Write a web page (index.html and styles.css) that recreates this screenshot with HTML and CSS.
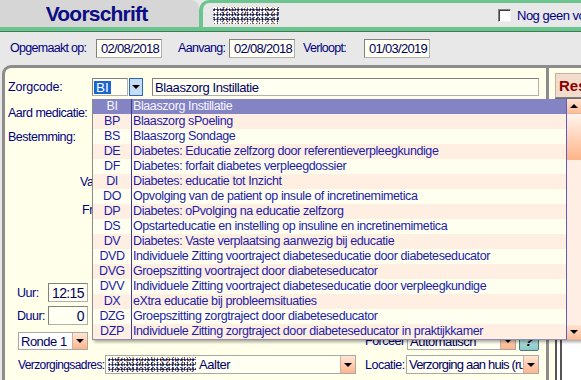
FILE: index.html
```html
<!DOCTYPE html>
<html lang="nl">
<head>
    <meta charset="UTF-8">
    <title>Voorschrift</title>
    <link rel="stylesheet" href="styles.css">
</head>
<body>
    <div class="header">
        <div class="tab-main">Voorschrift</div>
        <div class="tab-patient">
            <span class="noise noise-name"></span>
            <label class="check"><span class="check-box"></span>Nog geen voorschrift</label>
        </div>
    </div>

    <div class="dates">
        <span class="lbl lbl-opgemaakt">Opgemaakt op:</span>
        <span class="field date">02/08/2018</span>
        <span class="lbl lbl-aanvang">Aanvang:</span>
        <span class="field date">02/08/2018</span>
        <span class="lbl lbl-verloopt">Verloopt:</span>
        <span class="field date">01/03/2019</span>
    </div>

    <div class="work">
        <div class="panel">
            <div class="row row-zorgcode">
                <span class="lbl lbl-zorgcode">Zorgcode:</span>
                <span class="field code"><span class="sel">BI</span></span>
                <span class="drop drop-blue"></span>
                <span class="field desc">Blaaszorg Instillatie</span>
            </div>
            <div class="row row-aard"><span class="lbl">Aard medicatie:</span></div>
            <div class="row row-best"><span class="lbl">Bestemming:</span></div>
            <div class="row row-van"><span class="lbl lbl-van">Vanaf:</span></div>
            <div class="row row-freq"><span class="lbl lbl-freq">Frequentie:</span></div>

            <div class="row row-uur">
                <span class="lbl lbl-small">Uur:</span>
                <span class="field num">12:15</span>
            </div>
            <div class="row row-duur">
                <span class="lbl lbl-small">Duur:</span>
                <span class="field num">0</span>
            </div>
            <div class="row row-ronde">
                <span class="combo combo-ronde"><span class="combo-text">Ronde 1</span><span class="drop drop-peach"></span></span>
                <span class="lbl lbl-forceer">Forceer</span>
                <span class="combo combo-forceer"><span class="combo-text">Automatisch</span><span class="drop drop-peach"></span></span>
                <span class="help">?</span>
            </div>
            <div class="row row-verz">
                <span class="lbl lbl-verz">Verzorgingsadres:</span>
                <span class="combo combo-adres"><span class="combo-text"><span class="noise noise-adres"></span>&nbsp;Aalter</span><span class="drop drop-peach"></span></span>
                <span class="lbl lbl-locatie">Locatie:</span>
                <span class="combo combo-locatie"><span class="combo-text">Verzorging aan huis (rurale zone)</span><span class="drop drop-peach"></span></span>
            </div>
        </div>
        <div class="side">
            <div class="res-btn">Res</div>
            <div class="side-box"></div>
        </div>
    </div>

    <!-- open dropdown of Zorgcode -->
    <div class="dd">
        <div class="dd-list">
            <div class="opt opt-active"><span class="opt-code">BI</span><span class="opt-desc">Blaaszorg Instillatie</span></div>
            <div class="opt"><span class="opt-code">BP</span><span class="opt-desc">Blaaszorg sPoeling</span></div>
            <div class="opt"><span class="opt-code">BS</span><span class="opt-desc">Blaaszorg Sondage</span></div>
            <div class="opt"><span class="opt-code">DE</span><span class="opt-desc">Diabetes: Educatie zelfzorg door referentieverpleegkundige</span></div>
            <div class="opt"><span class="opt-code">DF</span><span class="opt-desc">Diabetes: forfait diabetes verpleegdossier</span></div>
            <div class="opt"><span class="opt-code">DI</span><span class="opt-desc">Diabetes: educatie tot Inzicht</span></div>
            <div class="opt"><span class="opt-code">DO</span><span class="opt-desc">Opvolging van de patient op insule of incretinemimetica</span></div>
            <div class="opt"><span class="opt-code">DP</span><span class="opt-desc">Diabetes: oPvolging na educatie zelfzorg</span></div>
            <div class="opt"><span class="opt-code">DS</span><span class="opt-desc">Opstarteducatie en instelling op insuline en incretinemimetica</span></div>
            <div class="opt"><span class="opt-code">DV</span><span class="opt-desc">Diabetes: Vaste verplaatsing aanwezig bij educatie</span></div>
            <div class="opt"><span class="opt-code">DVD</span><span class="opt-desc">Individuele Zitting voortraject diabeteseducatie door diabeteseducator</span></div>
            <div class="opt"><span class="opt-code">DVG</span><span class="opt-desc">Groepszitting voortraject door diabeteseducator</span></div>
            <div class="opt"><span class="opt-code">DVV</span><span class="opt-desc">Individuele Zitting voortraject diabeteseducatie door verpleegkundige</span></div>
            <div class="opt"><span class="opt-code">DX</span><span class="opt-desc">eXtra educatie bij probleemsituaties</span></div>
            <div class="opt"><span class="opt-code">DZG</span><span class="opt-desc">Groepszitting zorgtraject door diabeteseducator</span></div>
            <div class="opt"><span class="opt-code">DZP</span><span class="opt-desc">Individuele Zitting zorgtraject door diabeteseducator in praktijkkamer</span></div>
        </div>
        <div class="dd-scroll">
            <span class="sb-btn sb-up"></span>
            <span class="sb-thumb"></span>
            <span class="sb-track"></span>
            <span class="sb-btn sb-down"></span>
        </div>
    </div>
</body>
</html>
```

FILE: styles.css
```css
* {
    box-sizing: border-box;
}
body {
    margin: 0;
    width: 581px;
    height: 380px;
    overflow: hidden;
    position: relative;
    background-color: #e8e8e8;
    font-family: "Liberation Sans", Arial, sans-serif;
    font-size: 12.5px;
    letter-spacing: -0.5px;
    color: #000080;
}

/* tabs */
.header {
    display: flex;
    height: 31px;
    border-bottom: 4px solid #6cc48e;
    box-shadow: 0 1px 0 #3d7d55;
}
.tab-main {
    width: 199px;
    display: flex;
    align-items: center;
    justify-content: center;
    padding-right: 6px;
    background-color: #d6d6d6;
    border-top-right-radius: 8px;
    font-weight: bold;
    font-size: 21px;
    letter-spacing: -0.8px;
    color: #0c0c84;
}
.tab-patient {
    flex: 1;
    display: flex;
    align-items: center;
    padding-left: 10px;
    background-color: #e8e8e8;
    border-top: 3px solid #6cc48e;
    border-left: 4px solid #6cc48e;
    border-top-left-radius: 10px;
    overflow: hidden;
    white-space: nowrap;
}
.noise {
    display: inline-block;
    flex-shrink: 0;
    background-color: #fff;
    background-image:
        radial-gradient(circle, #161640 0.9px, transparent 1.2px),
        radial-gradient(circle, #3a3a60 0.8px, transparent 1.1px),
        radial-gradient(circle, #e8902c 0.8px, transparent 1px),
        radial-gradient(circle, #2c4cc8 0.8px, transparent 1px),
        radial-gradient(circle, #505050 0.7px, transparent 1px);
    background-size: 3px 5px, 5px 3px, 7px 4px, 4px 7px, 11px 6px;
    background-position: 0 0, 2px 1px, 1px 2px, 3px 0, 5px 3px;
}
.noise-name {
    width: 66px;
    height: 17px;
}
.check {
    display: flex;
    align-items: center;
    flex-shrink: 0;
    gap: 6px;
    margin-left: 219px;
    font-size: 13px;
}
.check-box {
    width: 13px;
    height: 13px;
    background-color: #fff;
    border: 1px solid #808080;
    border-right-color: #f0f0f0;
    border-bottom-color: #f0f0f0;
    box-shadow: inset 1px 1px 0 #404040;
}

/* dates */
.dates {
    display: flex;
    align-items: center;
    height: 34px;
    padding-left: 10px;
    letter-spacing: -0.7px;
}
.lbl {
    white-space: nowrap;
}
.lbl-opgemaakt {
    width: 86px;
}
.lbl-aanvang {
    width: 51px;
    margin-left: 16px;
}
.lbl-verloopt {
    width: 61px;
    margin-left: 8px;
}
.field {
    display: flex;
    align-items: center;
    background-color: #fffff2;
    border: 1px solid #b0b0b0;
    border-top-color: #808080;
    border-left-color: #808080;
    white-space: nowrap;
    overflow: hidden;
}
.date {
    width: 66px;
    height: 19px;
    padding-left: 4px;
    font-size: 13px;
    color: #000060;
}

/* main panel */
.work {
    display: flex;
    height: 315px;
}
.panel {
    width: 547px;
    margin-left: 2px;
    padding: 10px 0 0 3px;
    background-color: #ffffea;
    border: 3px solid #8c8c8c;
    border-bottom: none;
    border-top-left-radius: 9px;
}
.row {
    display: flex;
    align-items: center;
    height: 18px;
}
.lbl-zorgcode {
    width: 84px;
    letter-spacing: -0.2px;
}
.code {
    width: 36px;
    height: 18px;
    padding-left: 1px;
}
.sel {
    background-color: #1866d4;
    color: #fff;
    font-size: 13.5px;
    letter-spacing: 0;
    padding: 0 2px;
    line-height: 13px;
}
.drop {
    position: relative;
    width: 15px;
    height: 100%;
    flex-shrink: 0;
}
.drop::after {
    content: "";
    position: absolute;
    left: 3px;
    top: 50%;
    margin-top: -2px;
    border-left: 4px solid transparent;
    border-right: 4px solid transparent;
    border-top: 4px solid #000;
}
.drop-blue {
    width: 14px;
    margin-left: 1px;
    background-color: #c4dcf4;
    border: 1px solid #2c64c0;
}
.drop-blue::after {
    left: 2px;
}
.drop-peach {
    background: linear-gradient(#ffe6d4, #ffb48c);
    border-left: 1px solid #d0b0a0;
}
.desc {
    width: 387px;
    height: 18px;
    margin-left: 9px;
    padding-left: 2px;
    font-size: 13px;
    letter-spacing: -0.4px;
    color: #000060;
}
.row-aard {
    margin-top: 8px;
}
.row-best {
    margin-top: 6px;
}
.row-van {
    margin-top: 27px;
}
.lbl-van {
    margin-left: 72px;
}
.row-freq {
    margin-top: 10px;
}
.lbl-freq {
    margin-left: 74px;
}
.row-uur {
    margin-top: 64px;
    height: 19px;
}
.row-duur {
    margin-top: 4px;
    height: 19px;
}
.lbl-small {
    width: 31px;
    margin-left: 9px;
}
.num {
    width: 40px;
    height: 19px;
    justify-content: flex-end;
    padding-right: 3px;
    font-size: 14px;
    letter-spacing: -0.6px;
    color: #000060;
}
.row-ronde {
    margin-top: 7px;
}
.combo {
    display: flex;
    height: 100%;
    background-color: #fff;
    border: 1px solid #a8a8a8;
}
.combo-text {
    flex: 1;
    display: flex;
    align-items: center;
    padding-left: 2px;
    overflow: hidden;
    white-space: nowrap;
    font-size: 13px;
    letter-spacing: -0.5px;
    color: #000060;
}
.combo-ronde {
    width: 70px;
    margin-left: 10px;
}
.lbl-forceer {
    width: 42px;
    margin-left: 277px;
}
.combo-forceer {
    width: 109px;
    background-color: #fffff2;
}
.help {
    width: 20px;
    height: 19px;
    margin-left: 3px;
    display: flex;
    align-items: center;
    justify-content: center;
    background: linear-gradient(#c8eeee, #8cc8c8);
    border: 1px solid #507878;
    border-radius: 2px;
    font-weight: bold;
    font-style: italic;
    font-size: 14px;
    color: #000;
}
.row-verz {
    margin-top: 5px;
    height: 19px;
}
.lbl-verz {
    width: 87px;
    margin-left: 10px;
    font-size: 12px;
    letter-spacing: -0.6px;
}
.combo-adres {
    width: 251px;
    background-color: #fffff2;
}
.noise-adres {
    width: 88px;
    height: 15px;
}
.lbl-locatie {
    width: 41px;
    margin-left: 9px;
}
.combo-locatie {
    width: 133px;
    background-color: #fffff2;
}
.combo-locatie .combo-text {
    letter-spacing: -0.8px;
}

/* right side */
.side {
    flex: 1;
    padding: 5px 0 0 6px;
    background-color: #ffffea;
    border-top: 3px solid #8c8c8c;
    overflow: hidden;
}
.res-btn {
    width: 40px;
    height: 25px;
    padding: 3px 0 0 3px;
    background-color: #f2dccd;
    border: 1px solid #c8b0a0;
    border-bottom-color: #808080;
    box-shadow: 0 1px 0 #707070;
    font-weight: bold;
    font-size: 15px;
    letter-spacing: 0;
    color: #8a0000;
}
.side-box {
    height: 300px;
    margin-top: 12px;
    background-color: #fff;
    border-left: 7px double #555;
}

/* dropdown list */
.dd {
    position: absolute;
    left: 92px;
    top: 99px;
    width: 489px;
    height: 241px;
    display: flex;
    box-shadow: 2px 2px 3px rgba(0, 0, 0, 0.35);
}
.dd-list {
    width: 475px;
    background-color: #fffff2;
    border-left: 1px solid #8c8c8c;
    border-right: 1px solid #5c5cc4;
    border-bottom: 1px solid #9090b0;
}
.opt {
    display: flex;
    height: 15px;
    line-height: 15px;
    font-size: 12.5px;
    letter-spacing: -0.4px;
    color: #1c1ca8;
    white-space: nowrap;
    overflow: hidden;
    background-color: #fffff0;
}
.opt:nth-child(even) {
    background-color: #ffeee2;
}
.opt-active,
.opt-active:nth-child(even) {
    background-color: #8484c4;
    color: #f6f6ff;
}
.opt-code {
    width: 39px;
    flex-shrink: 0;
    text-align: center;
    border-right: 1px solid #3c3c8c;
}
.opt-desc {
    padding-left: 1px;
}
.dd-scroll {
    width: 14px;
    display: flex;
    flex-direction: column;
    background-color: #ffeee4;
}
.sb-btn {
    position: relative;
    height: 15px;
    background: linear-gradient(#ffe4d2, #ffbc96);
    border-bottom: 1px solid #e0b8a0;
}
.sb-btn::after {
    content: "";
    position: absolute;
    left: 3px;
    top: 5px;
    border-left: 4px solid transparent;
    border-right: 4px solid transparent;
}
.sb-up::after {
    border-bottom: 4px solid #000;
}
.sb-down::after {
    border-top: 4px solid #000;
}
.sb-thumb {
    height: 46px;
    background: linear-gradient(#fff4ee, #ffb488);
}
.sb-track {
    flex: 1;
}
```
